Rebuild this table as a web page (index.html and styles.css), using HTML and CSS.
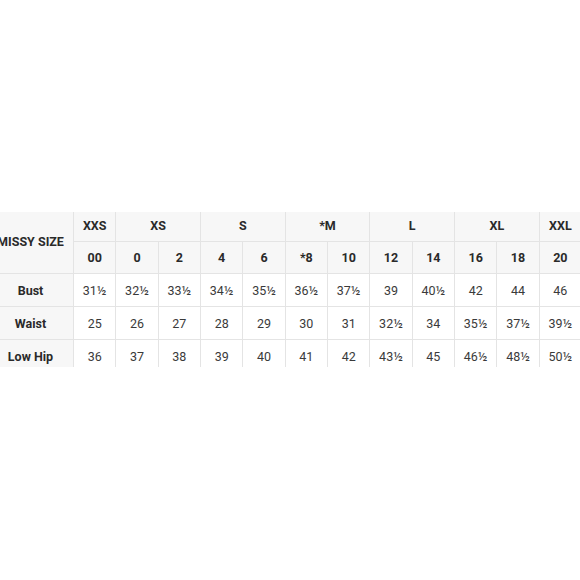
FILE: index.html
```html
<!DOCTYPE html>
<html>
<head>
<meta charset="utf-8">
<link rel="stylesheet" href="styles.css">
</head>
<body>
<div class="clip">
<table class="chart">
<colgroup>
<col class="c-label">
<col><col><col><col><col><col><col><col><col><col><col><col>
</colgroup>
<tr class="r-top">
<th class="label" rowspan="2">MISSY SIZE</th>
<th class="head">XXS</th>
<th class="head" colspan="2">XS</th>
<th class="head" colspan="2">S</th>
<th class="head" colspan="2">*M</th>
<th class="head" colspan="2">L</th>
<th class="head" colspan="2">XL</th>
<th class="head">XXL</th>
</tr>
<tr class="r-num">
<th class="head">00</th><th class="head">0</th><th class="head">2</th><th class="head">4</th><th class="head">6</th><th class="head">*8</th><th class="head">10</th><th class="head">12</th><th class="head">14</th><th class="head">16</th><th class="head">18</th><th class="head">20</th>
</tr>
<tr class="r-data">
<th class="label">Bust</th>
<td>31½</td><td>32½</td><td>33½</td><td>34½</td><td>35½</td><td>36½</td><td>37½</td><td>39</td><td>40½</td><td>42</td><td>44</td><td>46</td>
</tr>
<tr class="r-data">
<th class="label">Waist</th>
<td>25</td><td>26</td><td>27</td><td>28</td><td>29</td><td>30</td><td>31</td><td>32½</td><td>34</td><td>35½</td><td>37½</td><td>39½</td>
</tr>
<tr class="r-data">
<th class="label">Low Hip</th>
<td>36</td><td>37</td><td>38</td><td>39</td><td>40</td><td>41</td><td>42</td><td>43½</td><td>45</td><td>46½</td><td>48½</td><td>50½</td>
</tr>
</table>
</div>
</body>
</html>
```
FILE: styles.css
```css
html, body {
  margin: 0;
  padding: 0;
  background: #ffffff;
  overflow: hidden;
}
.clip {
  margin-top: 212px;
  height: 155px;
  width: 580px;
  overflow: hidden;
}
.chart {
  margin-top: -4px;
  margin-left: -13px;
  border-collapse: collapse;
  table-layout: fixed;
  width: 594px;
  font-family: Roboto, "Noto Sans", sans-serif;
  font-size: 12.5px;
  color: #333333;
}
.chart col { width: 42.33px; }
.chart col.c-label { width: 86px; }
.chart th, .chart td {
  border: 1px solid #e4e4e4;
  text-align: center;
  vertical-align: middle;
  padding: 0;
  white-space: nowrap;
}
.chart th {
  font-weight: 700;
  color: #2a2a2a;
  background: #f7f7f7;
}
.chart td {
  background: #ffffff;
  color: #3a3a3a;
}
.r-top { height: 33px; }
.r-num { height: 32px; }
.r-data { height: 33px; }
```
